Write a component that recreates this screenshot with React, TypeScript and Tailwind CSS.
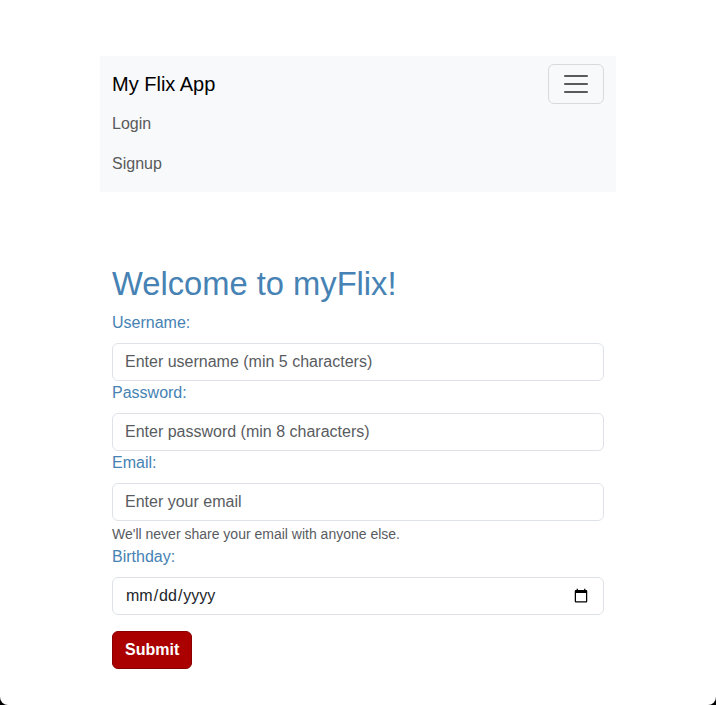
import { useState } from "react";

const fields = [
  { id: "username", label: "Username:", type: "text", placeholder: "Enter username (min 5 characters)" },
  { id: "password", label: "Password:", type: "password", placeholder: "Enter password (min 8 characters)" },
  { id: "email", label: "Email:", type: "email", placeholder: "Enter your email", hint: "We'll never share your email with anyone else." },
];

const inputClass =
  "block w-full h-[38px] px-3 text-base text-[#212529] bg-white border border-[#dee2e6] rounded-md outline-none placeholder:text-[#595c5f]";

export default function App() {
  const [values, setValues] = useState<Record<string, string>>({});

  return (
    <div className="bg-black">
      <div
        className="h-[705px] bg-white rounded-b-[8px] overflow-hidden"
        style={{ fontFamily: '"Liberation Sans", Arial, sans-serif' }}
      >
        <div className="w-[540px] mx-auto px-3 pt-14">
          {/* Navbar */}
          <nav className="bg-[#f8f9fa] px-3 py-2">
            <div className="flex items-center justify-between">
              <a href="#" className="text-[20px] leading-[30px] py-[5px] text-black">
                My Flix App
              </a>
              <button className="w-14 h-10 flex items-center justify-center border border-[#d9dadb] rounded-md">
                <svg width="30" height="30" viewBox="0 0 30 30">
                  <path
                    stroke="rgba(33,37,41,0.75)"
                    strokeLinecap="round"
                    strokeMiterlimit="10"
                    strokeWidth="2"
                    d="M4 7h22M4 15h22M4 23h22"
                  />
                </svg>
              </button>
            </div>
            <ul className="flex flex-col">
              <li>
                <a href="#" className="block py-2 leading-6 text-[#595a5c]">Login</a>
              </li>
              <li>
                <a href="#" className="block py-2 leading-6 text-[#595a5c]">Signup</a>
              </li>
            </ul>
          </nav>

          {/* Signup form */}
          <form className="mt-[72px] px-3" onSubmit={(e) => e.preventDefault()}>
            <h1 className="text-[32.7px] leading-[39px] mb-2 text-[#4682b4]">Welcome to myFlix!</h1>
            {fields.map((f) => (
              <div key={f.id}>
                <label htmlFor={f.id} className="block mb-2 leading-6 text-[#4682b4]">
                  {f.label}
                </label>
                <input
                  id={f.id}
                  type={f.type}
                  placeholder={f.placeholder}
                  value={values[f.id] ?? ""}
                  onChange={(e) => setValues({ ...values, [f.id]: e.target.value })}
                  className={inputClass}
                />
                {f.hint && (
                  <div className="mt-[2px] text-[14px] leading-[22px] text-[#595c5f]">{f.hint}</div>
                )}
              </div>
            ))}
            <label htmlFor="birthday" className="block mb-2 leading-6 text-[#4682b4]">
              Birthday:
            </label>
            <input id="birthday" type="date" className={inputClass} />
            <button
              type="submit"
              className="mt-4 h-[38px] px-3 rounded-md bg-[#aa0000] border border-[#8a0000] text-white font-bold"
            >
              Submit
            </button>
          </form>
        </div>
      </div>
    </div>
  );
}
